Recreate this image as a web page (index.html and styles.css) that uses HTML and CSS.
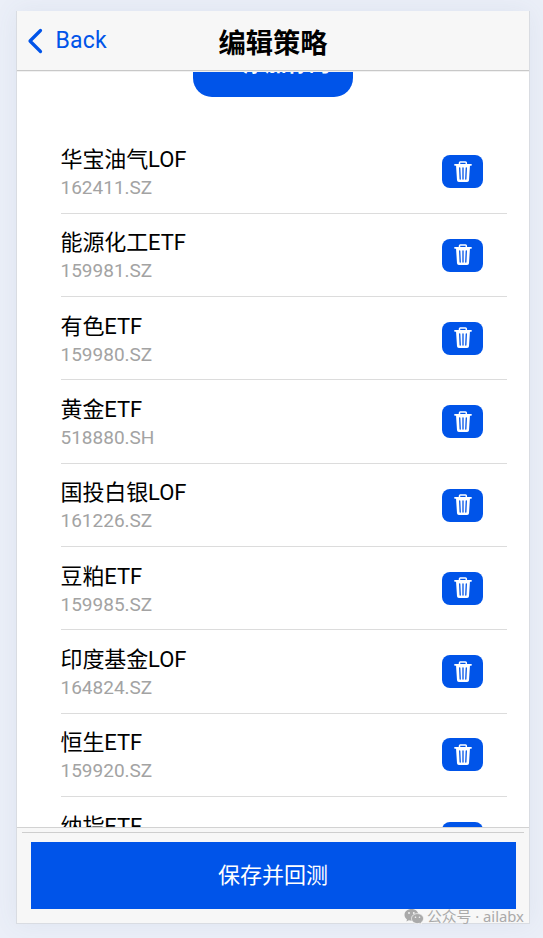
FILE: index.html
```html
<!DOCTYPE html>
<html lang="zh-CN">
<head>
    <meta charset="UTF-8">
    <meta name="viewport" content="width=device-width, initial-scale=1.0">
    <title>编辑策略</title>
    <link rel="stylesheet" href="styles.css">
</head>
<body>
    <svg class="icon-defs" aria-hidden="true">
        <symbol id="trash" viewBox="0 0 20 22">
            <path fill="none" stroke="#fff" stroke-width="1.5" d="M6.5 3V1.8Q6.5 1 7.3 1h5.2q.8 0 .8.8V3"/>
            <path fill="none" stroke="#fff" stroke-width="1.8" stroke-linecap="round" d="M2 3.800h16"/>
            <path fill="#fff" d="M3 4h14l-1 15.200q-.1 1.800-1.900 1.800H5.900Q4.100 21 4 19.200z"/>
            <path fill="none" stroke="#0054e9" stroke-width="1.300" stroke-linecap="round" d="M6.700 7l.5 11M10 7v11M13.300 7l-.5 11"/>
        </symbol>
    </svg>

    <div class="app">
        <header class="header">
            <a class="back">
                <svg width="16" height="26" viewBox="0 0 16 26"><path d="M13.500 2.500L3 13l10.500 10.500" fill="none" stroke="#0054e9" stroke-width="3.200" stroke-linecap="round" stroke-linejoin="round"/></svg>
                <span>Back</span>
            </a>
            <h1 class="title">编辑策略</h1>
        </header>

        <main class="content">
            <button class="add-btn"><span class="plus">+</span><span>添加标的</span></button>
            <ul class="list">
                <li class="item">
                    <div class="info"><h2>华宝油气LOF</h2><p>162411.SZ</p></div>
                    <button class="delete"><svg><use href="#trash"/></svg></button>
                </li>
                <li class="item">
                    <div class="info"><h2>能源化工ETF</h2><p>159981.SZ</p></div>
                    <button class="delete"><svg><use href="#trash"/></svg></button>
                </li>
                <li class="item">
                    <div class="info"><h2>有色ETF</h2><p>159980.SZ</p></div>
                    <button class="delete"><svg><use href="#trash"/></svg></button>
                </li>
                <li class="item">
                    <div class="info"><h2>黄金ETF</h2><p>518880.SH</p></div>
                    <button class="delete"><svg><use href="#trash"/></svg></button>
                </li>
                <li class="item">
                    <div class="info"><h2>国投白银LOF</h2><p>161226.SZ</p></div>
                    <button class="delete"><svg><use href="#trash"/></svg></button>
                </li>
                <li class="item">
                    <div class="info"><h2>豆粕ETF</h2><p>159985.SZ</p></div>
                    <button class="delete"><svg><use href="#trash"/></svg></button>
                </li>
                <li class="item">
                    <div class="info"><h2>印度基金LOF</h2><p>164824.SZ</p></div>
                    <button class="delete"><svg><use href="#trash"/></svg></button>
                </li>
                <li class="item">
                    <div class="info"><h2>恒生ETF</h2><p>159920.SZ</p></div>
                    <button class="delete"><svg><use href="#trash"/></svg></button>
                </li>
                <li class="item">
                    <div class="info"><h2>纳指ETF</h2></div>
                    <button class="delete"><svg><use href="#trash"/></svg></button>
                </li>
            </ul>
        </main>

        <footer class="footer">
            <button class="save-btn">保存并回测</button>
        </footer>
    </div>

    <div class="watermark">
        <svg width="20" height="17" viewBox="0 0 20 17">
            <path fill="#aaa" d="M7.500 1C3.500 1 .5 3.600.5 6.900c0 1.800 1 3.400 2.500 4.500l-.6 2.200 2.500-1.300c.8.200 1.700.4 2.600.4 4 0 7-2.600 7-5.800S11.500 1 7.500 1z"/>
            <path fill="#aaa" stroke="#f6f6f6" stroke-width=".8" d="M13.500 5.600c-3.400 0-6 2.200-6 5s2.600 5 6 5c.8 0 1.500-.1 2.200-.3l2 1-.5-1.800c1.400-.9 2.300-2.300 2.300-3.900 0-2.800-2.600-5-6-5z"/>
            <g fill="#f6f6f6"><circle cx="5" cy="5" r=".9"/><circle cx="9.800" cy="5" r=".9"/><circle cx="11.500" cy="9.200" r=".8"/><circle cx="15.500" cy="9.200" r=".8"/></g>
        </svg>
        <span>公众号 · ailabx</span>
    </div>
</body>
</html>
```

FILE: styles.css
```css
* {
    box-sizing: border-box;
}

body {
    margin: 0;
    height: 938px;
    padding: 11px 13px 14px 16px;
    overflow: hidden;
    background-color: #ebeff8;
    font-family: Roboto, "Noto Sans CJK SC", sans-serif;
}

h1, h2, p, ul {
    margin: 0;
    padding: 0;
}

button {
    border: none;
    padding: 0;
    background-color: #0054e9;
    color: #fff;
    font-family: inherit;
}

.icon-defs {
    display: none;
}

.app {
    display: flex;
    flex-direction: column;
    height: 913px;
    border: 1px solid #d9dce2;
    border-top: none;
    background-color: #fff;
    box-shadow: 0 0 24px rgba(80, 100, 140, 0.08);
}

.header {
    display: grid;
    grid-template-columns: 1fr auto 1fr;
    align-items: center;
    flex: none;
    height: 60px;
    background-color: #f7f7f7;
    border-bottom: 1px solid #c8c8c8;
}

.back {
    display: flex;
    align-items: center;
    gap: 12.5px;
    padding-left: 10px;
    color: #0054e9;
    font-size: 23px;
    line-height: 27px;
    letter-spacing: 0.2px;
}

.title {
    padding-top: 7px;
    font-size: 27.3px;
    font-weight: 700;
    line-height: 40px;
}

.content {
    flex: 1;
    min-height: 0;
    overflow: hidden;
    border-top: 1px solid #f1f1f1;
}

.add-btn {
    display: flex;
    justify-content: center;
    align-items: center;
    gap: 13px;
    width: 160px;
    height: 66px;
    margin: -41px auto 0 176px;
    padding: 0;
    border-radius: 19px;
    font-size: 22px;
    font-weight: 700;
    line-height: 30px;
}

.plus {
    font-size: 27px;
}

.list {
    list-style: none;
    margin: 33.6px 22px 0 43.5px;
}

.item {
    display: flex;
    justify-content: space-between;
    height: 83.3px;
    padding: 13.6px 24px 0 0;
    border-bottom: 1px solid #dcdcdc;
}

.info h2 {
    font-size: 22px;
    font-weight: 400;
    line-height: 31px;
    letter-spacing: -0.1px;
}

.info p {
    color: #a3a3a3;
    font-size: 19px;
    line-height: 26px;
}

.delete {
    display: flex;
    justify-content: center;
    align-items: center;
    width: 41px;
    height: 33px;
    margin-top: 11.2px;
    border-radius: 8px;
}

.delete svg {
    width: 20px;
    height: 22px;
}

.footer {
    flex: none;
    height: 96px;
    padding: 4px 5px 0;
    background-color: #f7f7f7;
    border-top: 1px solid #d2d2d2;
}

.save-btn {
    display: block;
    width: 485px;
    height: 67px;
    margin: 9px 8.6px 0;
    padding-bottom: 5px;
    font-size: 22px;
}

.footer::before {
    content: "";
    display: block;
    height: 1px;
    background-color: #cecece;
}

.watermark {
    position: absolute;
    left: 404px;
    top: 906px;
    display: flex;
    align-items: center;
    gap: 3px;
    color: #aaa;
    font-family: "Noto Sans", "Noto Sans CJK SC", sans-serif;
    font-size: 14.8px;
    line-height: 20px;
    white-space: nowrap;
}
```
